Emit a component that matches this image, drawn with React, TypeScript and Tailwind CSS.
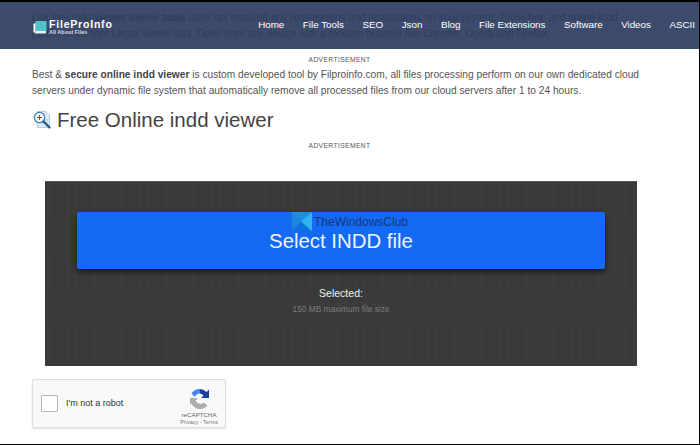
import React from 'react';

const navItems = ['Home', 'File Tools', 'SEO', 'Json', 'Blog', 'File Extensions', 'Software', 'Videos', 'ASCII'];

const Logo = () => (
    <div className="flex items-center gap-[2px] mt-[3px]">
        <svg width="14" height="15" viewBox="0 0 14 15" className="shrink-0">
            <path d="M2.5 1h11v10h-11z" fill="#4fc3c7" />
            <path d="M2.5 11h10.5v2.5H2.5z" fill="#e8f4f5" />
            <path d="M0.5 4v8l2 1.5V3z" fill="#ffffff" />
        </svg>
        <div className="flex flex-col">
            <span className="text-[10.5px] leading-[10px] font-bold tracking-[0.8px] text-white">FileProInfo</span>
            <span className="text-[5.5px] leading-[6px] font-bold text-[#d5dae3]">All About Files</span>
        </div>
    </div>
);

const SearchDocIcon = () => (
    <svg width="20" height="20" viewBox="0 0 20 20" className="shrink-0">
        <path d="M5 1.5h9l3.5 3.5v12.5H5z" fill="#dfeaf3" stroke="#a9c3d8" strokeWidth="0.8" />
        <path d="M10 10h6M11 13h5" stroke="#9fb9cf" strokeWidth="0.8" />
        <circle cx="7.5" cy="7.5" r="5.2" fill="#f2f8fc" stroke="#3f86b5" strokeWidth="1.3" />
        <path d="M5 7.5h5M7.5 5v5" stroke="#c0392b" strokeWidth="1" />
        <path d="M11.5 11.5l6 6" stroke="#1f5f8f" strokeWidth="2.4" strokeLinecap="round" />
    </svg>
);

const WindowsMark = () => (
    <svg width="20" height="19" viewBox="0 0 20 19" className="shrink-0">
        <path d="M0 0h20v19H0z" fill="#1a86dc" />
        <path d="M9 0h11L9 9.5 0 0z" fill="#1c8fe0" />
        <path d="M9 9.5L20 0v19z" fill="#2fb4ee" />
        <path d="M0 19l9-9.5 9 9.5z" fill="#0d72dc" />
    </svg>
);

const RecaptchaIcon = () => (
    <svg width="21" height="21" viewBox="0 0 21 21">
        <path d="M10.5 1A9.5 9.5 0 0 0 2.5 5.5L6 9a5.5 5.5 0 0 1 4.5-3.5z" fill="#4285f4" />
        <path d="M10.5 1a9.5 9.5 0 0 1 7 3l2.5-2.5V10h-8l2.5-2.5A5 5 0 0 0 10.5 5.5z" fill="#1c3f9e" />
        <path d="M1 10h8l-2.5 2.5A5.5 5.5 0 0 0 15 14.5l3.5 3A9.5 9.5 0 0 1 2.5 15.5L1 17z" fill="#adadad" />
    </svg>
);

export default function App() {
    return (
        <div className="w-[700px] h-[445px] overflow-hidden bg-white border-t-2 border-b border-r border-black font-['Liberation_Sans',Arial,sans-serif]">
            {/* Sticky nav, page text shows through it */}
            <div className="relative h-[47px] bg-[#3c4b6c] overflow-hidden">
                <div className="pl-[32px] pt-[8px] text-[10.2px] leading-[15.5px] text-[#303d5b] whitespace-nowrap">
                    <p>Our free indd <b>viewer online tools</b> does not required any registrations and installations on your system. 100% free and online indd</p>
                    <p>(.indd) document Lector viewer tool. Open from any device with a modern browser like Chrome, Opera and Firefox.</p>
                </div>
                <div className="absolute inset-0 flex items-center pl-[33px] pr-[4px] justify-between">
                    <Logo />
                    <nav className="flex items-center gap-[18.5px] text-[9.8px] text-white">
                        {navItems.map((item) => (
                            <span key={item}>{item}</span>
                        ))}
                    </nav>
                </div>
            </div>

            <div className="pl-[32px] pr-[52px]">
                <p className="pt-[6px] text-center text-[6.7px] leading-[9px] tracking-[0.4px] text-[#555]">ADVERTISEMENT</p>
                <div className="mt-[3px] text-[10.2px] leading-[15.5px] text-[#555] whitespace-nowrap">
                    <p>Best &amp; <b className="text-[#444]">secure online indd viewer</b> is custom developed tool by Filproinfo.com, all files processing perform on our own dedicated cloud</p>
                    <p>servers under dynamic file system that automatically remove all processed files from our cloud servers after 1 to 24 hours.</p>
                </div>
                <div className="mt-[9px] flex items-center gap-[5px]">
                    <SearchDocIcon />
                    <h1 className="text-[20.5px] leading-[26px] text-[#444]">Free Online indd viewer</h1>
                </div>
                <p className="mt-[8px] text-center text-[6.7px] leading-[9px] tracking-[0.4px] text-[#555]">ADVERTISEMENT</p>
            </div>

            {/* Upload panel */}
            <div className="ml-[45px] mt-[31px] w-[592px] h-[185px] border-t border-[#555] bg-[#3a3a3a] bg-[radial-gradient(#3e3e3e_1px,transparent_3px)] bg-[length:9px_9px] pt-[30px] flex flex-col items-center">
                <div className="relative w-[528px] h-[57px] bg-[#1469f5] rounded-[2px] shadow-[0_3px_6px_rgba(0,0,0,0.6)] flex items-center justify-center">
                    <span className="text-[20.4px] text-[#eef4ff] mt-[1px]">Select INDD file</span>
                    <div className="absolute left-[215px] top-0 flex items-start">
                        <WindowsMark />
                        <span className="mt-[3px] ml-[2px] text-[12px] leading-[14px] text-[#123a7a]">TheWindowsClub</span>
                    </div>
                </div>
                <p className="mt-[17px] text-[10.5px] leading-[14px] text-[#f0f0f0]">Selected:</p>
                <p className="mt-[4px] text-[8.3px] leading-[11px] text-[#7c7c7c]">150 MB maximum file size</p>
            </div>

            {/* reCAPTCHA */}
            <div className="ml-[32px] mt-[13px] w-[194px] h-[49px] bg-[#f9f9f9] border border-[#dfdfdf] rounded-[2px] shadow-[0_1px_2px_rgba(0,0,0,0.12)] flex items-center">
                <div className="ml-[8px] w-[17px] h-[17px] bg-white border border-[#b5b5b5] rounded-[1px]" />
                <span className="ml-[8px] mt-[1px] text-[9px] text-[#333]">I'm not a robot</span>
                <div className="ml-auto mr-[7px] pt-[5px] flex flex-col items-center">
                    <RecaptchaIcon />
                    <span className="text-[6.2px] leading-[7px] mt-[2px] text-[#666]">reCAPTCHA</span>
                    <span className="text-[5.5px] leading-[6px] mt-[1px] text-[#777]">Privacy - Terms</span>
                </div>
            </div>
        </div>
    );
}
